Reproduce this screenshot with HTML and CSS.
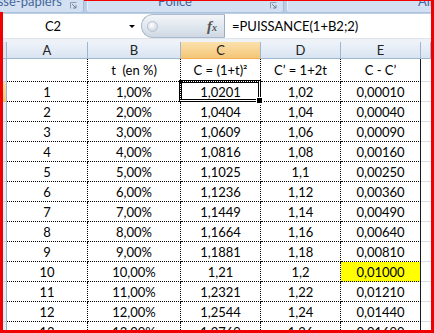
FILE: index.html
```html
<!DOCTYPE html>
<html lang="fr">
<head>
<meta charset="utf-8">
<title>Excel</title>
<link rel="stylesheet" href="styles.css">
</head>
<body>
<div class="frame">
  <div class="ribbon">
    <div class="group g1"><span class="glabel">Presse-papiers</span><svg class="launcher" width="7" height="7" viewBox="0 0 7 7"><path d="M0.5 6.5V0.5H6.5" fill="none" stroke="#8a9cb4"/><path d="M2 2L6 6M6 3V6H3" fill="none" stroke="#6f829c"/></svg></div>
    <div class="ribbon-rest">
      <div class="group g2"><span class="glabel">Police</span><svg class="launcher" width="7" height="7" viewBox="0 0 7 7"><path d="M0.5 6.5V0.5H6.5" fill="none" stroke="#8a9cb4"/><path d="M2 2L6 6M6 3V6H3" fill="none" stroke="#6f829c"/></svg></div>
      <div class="group g3"><span class="glabel">Alignement</span></div>
    </div>
  </div>
  <div class="body">
    <div class="ribbon-edge"></div>
    <div class="fbar">
      <div class="namebox"><span class="ref">C2</span><span class="caret"></span></div>
      <div class="capsule"><span class="knob"></span><span class="fx">f<span class="fxx">x</span></span></div>
      <div class="formula">=PUISSANCE(1+B2;2)</div>
    </div>
    <div class="gap"></div>
    <div class="sheet">
      <div class="row hrow"><div class="rh corner"></div><div class="h">A</div><div class="h">B</div><div class="h on">C</div><div class="h">D</div><div class="h">E</div><div class="h">&nbsp;</div></div>
      <div class="row trow"><div class="rh"></div><div class="c"></div><div class="c">t&nbsp; (en %)</div><div class="c">C = (1+t)²</div><div class="c">C’ = 1+2t</div><div class="c e">C - C’</div><div class="f"></div></div>
      <div class="row"><div class="rh on"></div><div class="c">1</div><div class="c">1,00%</div><div class="c active">1,0201<span class="sel"></span><span class="handle"></span></div><div class="c">1,02</div><div class="c e">0,00010</div><div class="f"></div></div>
      <div class="row"><div class="rh"></div><div class="c">2</div><div class="c">2,00%</div><div class="c">1,0404</div><div class="c">1,04</div><div class="c e">0,00040</div><div class="f"></div></div>
      <div class="row"><div class="rh"></div><div class="c">3</div><div class="c">3,00%</div><div class="c">1,0609</div><div class="c">1,06</div><div class="c e">0,00090</div><div class="f"></div></div>
      <div class="row"><div class="rh"></div><div class="c">4</div><div class="c">4,00%</div><div class="c">1,0816</div><div class="c">1,08</div><div class="c e">0,00160</div><div class="f"></div></div>
      <div class="row"><div class="rh"></div><div class="c">5</div><div class="c">5,00%</div><div class="c">1,1025</div><div class="c">1,1</div><div class="c e">0,00250</div><div class="f"></div></div>
      <div class="row"><div class="rh"></div><div class="c">6</div><div class="c">6,00%</div><div class="c">1,1236</div><div class="c">1,12</div><div class="c e">0,00360</div><div class="f"></div></div>
      <div class="row"><div class="rh"></div><div class="c">7</div><div class="c">7,00%</div><div class="c">1,1449</div><div class="c">1,14</div><div class="c e">0,00490</div><div class="f"></div></div>
      <div class="row"><div class="rh"></div><div class="c">8</div><div class="c">8,00%</div><div class="c">1,1664</div><div class="c">1,16</div><div class="c e">0,00640</div><div class="f"></div></div>
      <div class="row"><div class="rh"></div><div class="c">9</div><div class="c">9,00%</div><div class="c">1,1881</div><div class="c">1,18</div><div class="c e">0,00810</div><div class="f"></div></div>
      <div class="row"><div class="rh"></div><div class="c">10</div><div class="c">10,00%</div><div class="c">1,21</div><div class="c">1,2</div><div class="c e yellow">0,01000</div><div class="f"></div></div>
      <div class="row"><div class="rh"></div><div class="c">11</div><div class="c">11,00%</div><div class="c">1,2321</div><div class="c">1,22</div><div class="c e">0,01210</div><div class="f"></div></div>
      <div class="row"><div class="rh"></div><div class="c">12</div><div class="c">12,00%</div><div class="c">1,2544</div><div class="c">1,24</div><div class="c e">0,01440</div><div class="f"></div></div>
      <div class="row"><div class="rh"></div><div class="c">13</div><div class="c">13,00%</div><div class="c">1,2769</div><div class="c">1,26</div><div class="c e">0,01690</div><div class="f"></div></div>
    </div>
  </div>
</div>
</body>
</html>
```
FILE: styles.css
```css
body {
  margin: 0;
}

.frame {
  width: 434px;
  height: 333px;
  box-sizing: border-box;
  border-right: 3px solid #f00000;
  border-bottom: 3px solid #f00000;
  display: flex;
  flex-direction: column;
  overflow: hidden;
  background: #fff;
  font-family: Lato, "Liberation Sans", sans-serif;
  color: #000;
}

/* ribbon group labels */
.ribbon {
  height: 12px;
  flex: none;
  display: flex;
  background: #b9cde6;
}

.ribbon-rest {
  flex: 1;
  display: flex;
  gap: 3px;
  padding-left: 3px;
  border-top: 1px solid #f00000;
}

.group {
  display: flex;
  align-items: flex-start;
  background: #d2e0f2;
  border-right: 1px solid #a2bad6;
  border-left: 1px solid #e9f0f9;
  border-radius: 0 0 3px 3px;
  overflow: hidden;
  box-sizing: border-box;
}

.glabel {
  font-size: 13px;
  line-height: 13px;
  margin-top: -6px;
  color: #46679a;
  white-space: nowrap;
}

.launcher {
  flex: none;
  margin-top: 1px;
}

.g1 {
  width: 84px;
  flex: none;
  justify-content: flex-end;
  padding-right: 6px;
  border-left: none;
}

.g1 .glabel {
  margin-top: -5px;
}

.g1 .launcher {
  margin-left: 8px;
  margin-top: 2px;
}

.g2 {
  width: 197px;
  padding-left: 70px;
  padding-right: 6px;
}

.g2 .launcher {
  margin-left: auto;
}

.g3 {
  flex: 1;
  padding-left: 130px;
  border-right: none;
}

.body {
  flex: 1;
  display: flex;
  flex-direction: column;
  min-height: 0;
  border-left: 3px solid #f00000;
}

.ribbon-edge {
  height: 2px;
  flex: none;
  background: linear-gradient(#9fb8d6, #c8d8ec);
}

/* formula bar */
.fbar {
  height: 24px;
  flex: none;
  display: flex;
  background: #fff;
  font-size: 13px;
}

.namebox {
  width: 134px;
  display: flex;
  align-items: center;
}

.ref {
  width: 100px;
  text-align: center;
}

.caret {
  margin-left: 26px;
  width: 0;
  height: 0;
  border-left: 3px solid transparent;
  border-right: 3px solid transparent;
  border-top: 3px solid #000;
}

.capsule {
  margin-left: 4px;
  width: 84px;
  box-sizing: border-box;
  border: 1px solid #aab9cb;
  border-right-color: #9aabbf;
  border-radius: 12px 0 0 12px;
  background: linear-gradient(#f3f6f9, #dfe6ee 55%, #cfd8e3);
  display: flex;
  align-items: center;
}

.knob {
  width: 9px;
  height: 9px;
  margin-left: 5px;
  border-radius: 50%;
  border: 1px solid #b6c2d0;
  background: radial-gradient(circle at 40% 35%, #ffffff, #c3ccd7);
}

.fx {
  margin-left: auto;
  margin-right: 7px;
  font-family: "Liberation Serif", serif;
  font-style: italic;
  font-weight: bold;
  font-size: 15px;
  color: #555;
}

.fxx {
  font-size: 10px;
  font-weight: bold;
}

.formula {
  flex: 1;
  display: flex;
  align-items: center;
  padding-left: 7px;
}

.gap {
  height: 4px;
  flex: none;
  box-sizing: border-box;
  background: #eef2f7;
  border-top: 1px solid #dde4ec;
}

/* sheet */
.sheet {
  flex: 1;
  overflow: hidden;
  font-size: 13px;
}

.row {
  display: grid;
  grid-template-columns: 4px 81px 93px 80px 80px 80px 1fr;
  height: 20px;
}

.hrow {
  height: 17px;
}

.trow {
  height: 23px;
}

.rh {
  box-sizing: border-box;
  background: #e4ecf7;
  border-right: 1px solid #9eb6ce;
  border-bottom: 1px solid #c3d2e4;
}

.rh.on {
  background: linear-gradient(#fbdfa8, #f5c87c);
  border-bottom-color: #f2b458;
}

.rh.corner {
  background: #dfe6ef;
  border-bottom-color: #9eb6ce;
}

.h {
  box-sizing: border-box;
  display: flex;
  align-items: center;
  justify-content: center;
  background: linear-gradient(#eef3fa, #d9e4f2);
  border-right: 1px solid #9eb6ce;
  border-bottom: 1px solid #9eb6ce;
  color: #222;
}

.h.on {
  background: linear-gradient(#fbe1ad, #f4c677);
  border-bottom-color: #f2ae4f;
}

.c {
  box-sizing: border-box;
  display: flex;
  align-items: center;
  justify-content: center;
  white-space: nowrap;
  border-right: 1px dotted #000;
  border-bottom: 1px dotted #000;
}

.c.e {
  border-right: 1px solid #1a1a1a;
}

.c.yellow {
  background: #ffff00;
}

.f {
  box-sizing: border-box;
  border-bottom: 1px solid #d6dde8;
}

.c.active {
  position: relative;
}

.sel {
  position: absolute;
  left: -2px;
  top: -2px;
  right: -1px;
  bottom: -1px;
  border: 3px double #000;
}

.handle {
  position: absolute;
  right: -3px;
  bottom: -3px;
  width: 5px;
  height: 5px;
  background: #000;
  border: 1px solid #fff;
}
```
